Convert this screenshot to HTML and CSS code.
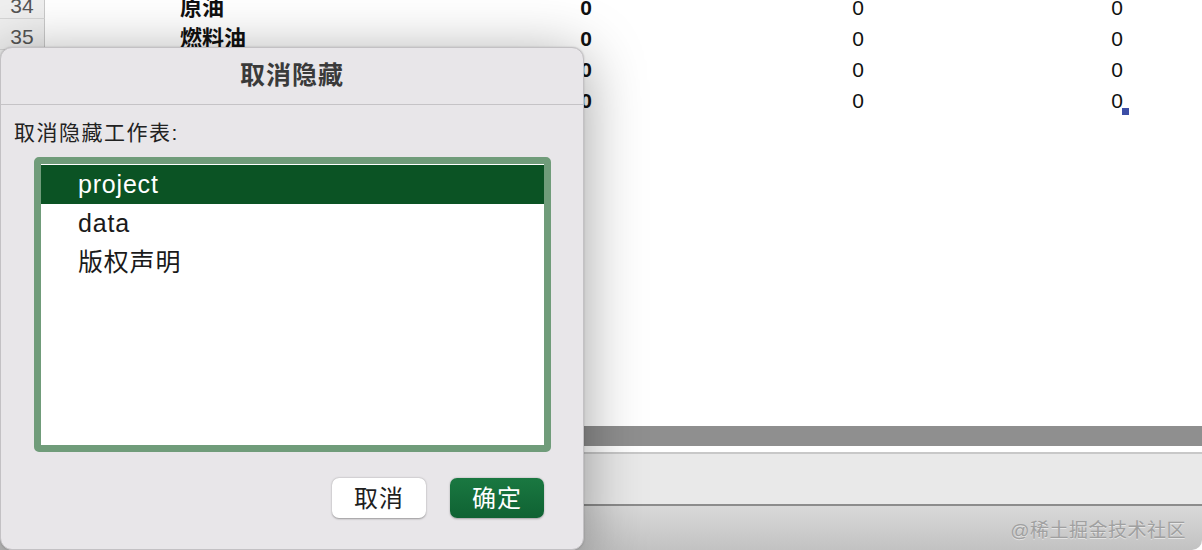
FILE: index.html
```html
<!DOCTYPE html>
<html lang="zh-CN">
<head>
	<meta charset="UTF-8">
	<title>取消隐藏</title>
	<link rel="stylesheet" href="styles.css">
</head>
<body>
	<div class="window">
		<div class="sheet">
			<div class="row">
				<div class="rh">34</div>
				<div class="cell colb">原油</div>
				<div class="cell colc num bold">0</div>
				<div class="cell cold num">0</div>
				<div class="cell cole num">0</div>
			</div>
			<div class="row">
				<div class="rh">35</div>
				<div class="cell colb">燃料油</div>
				<div class="cell colc num bold">0</div>
				<div class="cell cold num">0</div>
				<div class="cell cole num">0</div>
			</div>
			<div class="row">
				<div class="rh">36</div>
				<div class="cell colb">汽油</div>
				<div class="cell colc num bold">0</div>
				<div class="cell cold num">0</div>
				<div class="cell cole num">0</div>
			</div>
			<div class="row">
				<div class="rh">37</div>
				<div class="cell colb">柴油</div>
				<div class="cell colc num bold">0</div>
				<div class="cell cold num">0</div>
				<div class="cell cole num selected">0<span class="handle"></span></div>
			</div>
		</div>
		<div class="hscroll"></div>
		<div class="gap"></div>
		<div class="tabs"></div>
		<div class="status">
			<span class="mark">@稀土掘金技术社区</span>
		</div>

		<!-- 取消隐藏对话框 -->
		<div class="dialog">
			<div class="dlg-title">取消隐藏</div>
			<div class="dlg-label">取消隐藏工作表:</div>
			<div class="listbox">
				<ul>
					<li class="active">project</li>
					<li>data</li>
					<li>版权声明</li>
				</ul>
			</div>
			<div class="dlg-btns">
				<button class="btn">取消</button>
				<button class="btn primary">确定</button>
			</div>
		</div>
	</div>
</body>
</html>
```

FILE: styles.css
```css
*{padding:0;margin:0;box-sizing:border-box;}
body{
	width:1202px;
	height:550px;
	overflow:hidden;
	background:#fff;
	font-family:"Liberation Sans","Noto Sans CJK SC",sans-serif;
	color:#111;
}
.window{
	width:1202px;
	height:550px;
	position:relative;
	display:flex;
	flex-direction:column;
	overflow:hidden;
	border-bottom-right-radius:10px;
	background:#fff;
}
.sheet{
	flex:1;
	display:flex;
	flex-direction:column;
	margin-top:-12px;
	background:#fff;
}
.row{
	display:flex;
	height:31px;
}
.rh{
	width:45px;
	flex:none;
	background:#efefef;
	border-right:1px solid #c9c9c9;
	border-bottom:1px solid #d6d6d6;
	color:#555;
	font-size:21px;
	line-height:22px;
	display:flex;
	align-items:flex-end;
	justify-content:center;
	padding-bottom:1px;
}
.cell{
	flex:none;
	font-size:21px;
	line-height:22px;
	display:flex;
	align-items:flex-end;
	position:relative;
}
.colb{
	width:415px;
	padding-left:135px;
	font-weight:bold;
	font-size:22px;
}
.colc{width:134px;}
.cold{width:272px;}
.cole{width:259px;}
.num{
	justify-content:flex-end;
	padding-right:2px;
}
.bold{font-weight:bold;}
.handle{
	position:absolute;
	right:-4px;
	bottom:-3px;
	width:7px;
	height:7px;
	background:#3c4ea6;
}
.hscroll{
	height:20px;
	background:#8f8f8f;
}
.gap{
	height:8px;
	background:#fff;
	border-bottom:2px solid #c8c8c8;
}
.tabs{
	height:52px;
	background:#e9e9e9;
	border-bottom:2px solid #8c8c8c;
}
.status{
	flex:none;
	height:44px;
	background:linear-gradient(#d9d9d9,#c2c2c2);
	display:flex;
	align-items:center;
	justify-content:flex-end;
	padding-right:16px;
}
.mark{
	font-size:19px;
	color:#a0a0a0;
	text-shadow:0 1px 0 rgba(255,255,255,.5);
	letter-spacing:0.5px;
}

.dialog{
	position:absolute;
	left:0;
	top:47px;
	width:584px;
	height:503px;
	background:#e8e6e9;
	border:1px solid #c3c1c4;
	border-radius:12px;
	box-shadow:0 10px 60px rgba(0,0,0,.38),0 0 2px rgba(0,0,0,.2);
	display:flex;
	flex-direction:column;
}
.dlg-title{
	height:57px;
	border-bottom:1px solid #c5c3c6;
	text-align:center;
	font-size:25px;
	font-weight:bold;
	letter-spacing:1px;
	line-height:54px;
	color:#3a3a3a;
}
.dlg-label{
	padding:16px 0 0 13px;
	font-size:21px;
	letter-spacing:1.5px;
	line-height:24px;
	color:#222;
}
.listbox{
	margin:12px 0 0 33px;
	width:517px;
	height:295px;
	border:7px solid #709c7a;
	border-radius:5px;
	background:#fff;
	padding-top:1px;
}
.listbox ul{list-style:none;}
.listbox li{
	height:39px;
	line-height:39px;
	padding-left:37px;
	font-size:25px;
	letter-spacing:0.8px;
	color:#1a1a1a;
}
.listbox li.active{
	background:#0b5324;
	color:#fff;
}
.dlg-btns{
	display:flex;
	justify-content:flex-end;
	gap:24px;
	padding:26px 39px 0 0;
}
.btn{
	width:94px;
	height:40px;
	border:none;
	border-radius:7px;
	background:#fff;
	box-shadow:0 0.5px 2px rgba(0,0,0,.35);
	font-family:"Liberation Sans","Noto Sans CJK SC",sans-serif;
	font-size:24px;
	letter-spacing:1px;
	padding-bottom:4px;
	color:#1e1e1e;
}
.btn.primary{
	background:linear-gradient(#1a7841,#0f6233);
	color:#fff;
	box-shadow:0 0.5px 2px rgba(0,0,0,.3);
}
```
